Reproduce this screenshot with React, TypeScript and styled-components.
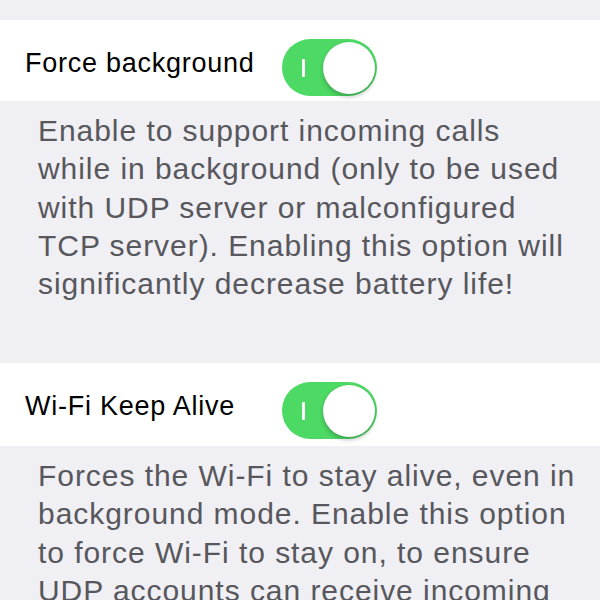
import React from "react";
import styled, { createGlobalStyle } from "styled-components";

const GlobalStyle = createGlobalStyle`
  html, body {
    margin: 0;
    padding: 0;
    background: #efeff4;
  }
  body {
    font-family: "Liberation Sans", Arial, Helvetica, sans-serif;
    -webkit-font-smoothing: antialiased;
  }
`;

const Page = styled.div`
  width: 600px;
  height: 600px;
  overflow: hidden;
  background: #efeff4;
  padding-top: 20px;
  box-sizing: border-box;
  display: flex;
  flex-direction: column;
`;

const Row = styled.div<{ $h: number }>`
  height: ${(p) => p.$h}px;
  flex-shrink: 0;
  background: #ffffff;
  display: grid;
  grid-template-columns: 257px auto;
  align-items: start;
  padding-left: 25px;
  box-sizing: border-box;
`;

const Label = styled.div`
  margin-top: 30px;
  font-size: 27px;
  line-height: 1;
  letter-spacing: 0.75px;
  color: #000;
  white-space: nowrap;
`;

const Track = styled.div`
  margin-top: 19px;
  width: 95px;
  height: 57px;
  border-radius: 29px;
  background: #4cd964;
  display: flex;
  align-items: center;
  justify-content: space-between;
  padding: 0 2px 0 20px;
  box-sizing: border-box;
`;

const OnMark = styled.span`
  width: 3px;
  height: 18px;
  background: #ffffff;
  border-radius: 1px;
`;

const Knob = styled.span`
  width: 52px;
  height: 52px;
  border-radius: 50%;
  background: #ffffff;
  box-shadow: 0 3px 4px rgba(0, 0, 0, 0.22), 0 0 1px rgba(0, 0, 0, 0.18);
`;

const Footer = styled.div<{ $h: number }>`
  height: ${(p) => p.$h}px;
  padding: 11px 0 0 38px;
  box-sizing: border-box;
  color: #57575c;
  font-size: 30px;
  line-height: 38.3px;
  letter-spacing: 0.95px;
  flex-shrink: 0;
`;

const Line = styled.span`
  display: block;
  white-space: nowrap;
`;

const Switch: React.FC = () => (
  <Track role="switch" aria-checked="true">
    <OnMark />
    <Knob />
  </Track>
);

const Setting: React.FC<{ label: string; h: number; lines: string[]; fh: number }> = ({
  label,
  h,
  lines,
  fh,
}) => (
  <>
    <Row $h={h}>
      <Label>{label}</Label>
      <Switch />
    </Row>
    <Footer $h={fh}>
      {lines.map((l, i) => (
        <Line key={i}>{l}</Line>
      ))}
    </Footer>
  </>
);

export default function App() {
  return (
    <>
      <GlobalStyle />
      <Page>
        <Setting
          label="Force background"
          h={81}
          fh={262}
          lines={[
            "Enable to support incoming calls",
            "while in background (only to be used",
            "with UDP server or malconfigured",
            "TCP server). Enabling this option will",
            "significantly decrease battery life!",
          ]}
        />
        <Setting
          label="Wi-Fi Keep Alive"
          h={83}
          fh={260}
          lines={[
            "Forces the Wi-Fi to stay alive, even in",
            "background mode. Enable this option",
            "to force Wi-Fi to stay on, to ensure",
            "UDP accounts can receive incoming",
            "calls.",
          ]}
        />
      </Page>
    </>
  );
}
